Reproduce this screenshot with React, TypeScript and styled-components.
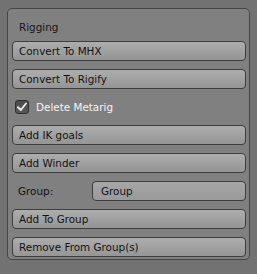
import styled, { createGlobalStyle } from "styled-components";

const GlobalStyle = createGlobalStyle`
  html, body {
    margin: 0;
    padding: 0;
    background: #727272;
  }
  body {
    font-family: "DejaVu Sans", "Liberation Sans", sans-serif;
    font-size: 10.4px;
  }
`;

const Page = styled.div`
  width: 257px;
  height: 274px;
  padding: 8px 7px 0 7px;
  box-sizing: border-box;
`;

const Panel = styled.div`
  border: 1px solid #464646;
  border-radius: 5px;
  background: #808080;
  padding: 0 3px 2px 4px;
  display: flex;
  flex-direction: column;
`;

const Header = styled.div`
  height: 28px;
  padding-top: 4px;
  box-sizing: border-box;
  line-height: 28px;
  padding-left: 7px;
  color: #161616;
`;

const Stack = styled.div`
  margin-top: 4px;
  display: flex;
  flex-direction: column;
  gap: 8px;
`;

const Button = styled.div`
  height: 20px;
  box-sizing: border-box;
  border: 1px solid #3e3e3e;
  border-radius: 4px;
  background: linear-gradient(to bottom, #adadad, #959595);
  padding-left: 6px;
  line-height: 18px;
  color: #111;
  white-space: nowrap;
`;

const CheckRow = styled.label`
  height: 20px;
  display: flex;
  align-items: center;
  gap: 7px;
  padding-left: 3px;
  color: #f4f4f4;
`;

const Box = styled.span`
  width: 14px;
  height: 14px;
  box-sizing: border-box;
  border: 1px solid #2e2e2e;
  border-radius: 3px;
  background: linear-gradient(to bottom, #4c4c4c, #575757);
  display: flex;
  align-items: center;
  justify-content: center;
`;

const FieldRow = styled.div`
  height: 20px;
  display: flex;
  align-items: center;
`;

const FieldLabel = styled.span`
  width: 80px;
  box-sizing: border-box;
  padding-left: 6px;
  color: #111;
`;

const Field = styled(Button)`
  flex: 1;
  padding-left: 8px;
  background: linear-gradient(to bottom, #a6a6a6, #9a9a9a);
`;

export default function App() {
  return (
    <Page>
      <GlobalStyle />
      <Panel>
        <Header>Rigging</Header>
        <Stack>
          <Button>Convert To MHX</Button>
          <Button>Convert To Rigify</Button>
          <CheckRow>
            <Box>
              <svg width="12" height="12" viewBox="0 0 12 12">
                <path d="M2 6.2 L4.8 9 L10 2.5" fill="none" stroke="#e8e8e8" strokeWidth="2" strokeLinecap="round" strokeLinejoin="round" />
              </svg>
            </Box>
            Delete Metarig
          </CheckRow>
          <Button>Add IK goals</Button>
          <Button>Add Winder</Button>
          <FieldRow>
            <FieldLabel>Group:</FieldLabel>
            <Field>Group</Field>
          </FieldRow>
          <Button>Add To Group</Button>
          <Button>Remove From Group(s)</Button>
        </Stack>
      </Panel>
    </Page>
  );
}
